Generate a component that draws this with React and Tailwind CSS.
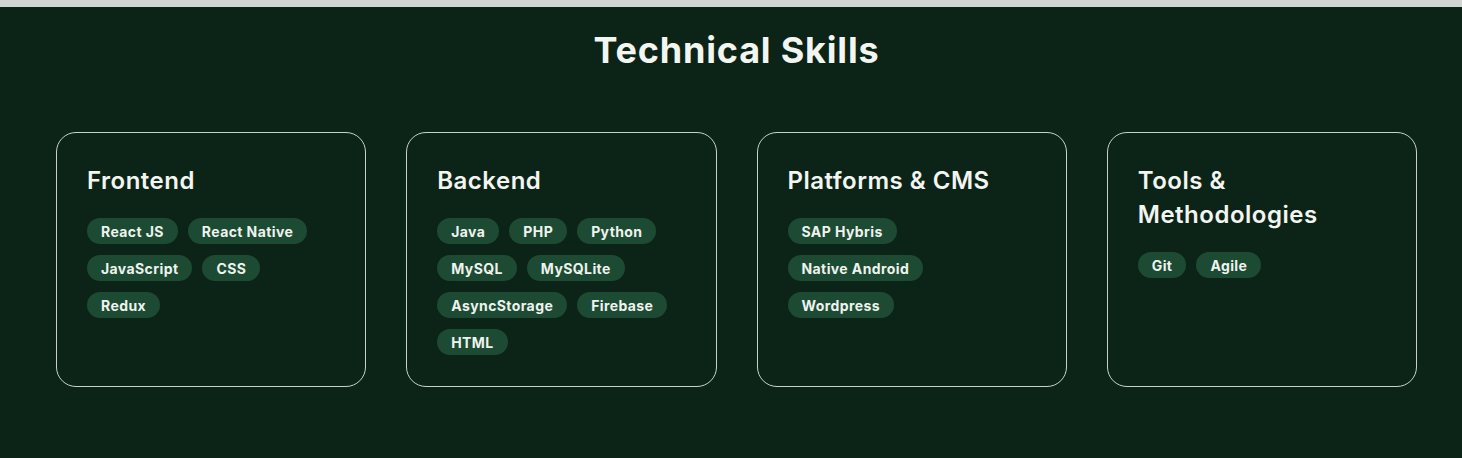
import React from "react";

const groups = [
  { title: "Frontend", items: ["React JS", "React Native", "JavaScript", "CSS", "Redux"] },
  { title: "Backend", items: ["Java", "PHP", "Python", "MySQL", "MySQLite", "AsyncStorage", "Firebase", "HTML"] },
  { title: "Platforms & CMS", items: ["SAP Hybris", "Native Android", "Wordpress"] },
  { title: "Tools & Methodologies", items: ["Git", "Agile"] },
];

export default function App() {
  return (
    <div className="min-h-[458px] bg-[#0c2418] text-[#f2f5f0]" style={{ fontFamily: "Inter, 'Noto Sans', sans-serif" }}>
      <div className="h-[7px] bg-[#d0d6d2]" />
      <section className="pt-[23px] pb-[72px] pl-[56px] pr-[45px]">
        <h2 className="text-center text-[36px] leading-[40px] font-bold tracking-[0.8px]">Technical Skills</h2>
        <div className="mt-[62px] grid grid-cols-4 gap-[40px]">
          {groups.map((g) => (
            <div key={g.title} className="h-[255px] rounded-[20px] border border-[#c9d1cc] px-[30px] pt-[31px]">
              <h3 className="text-[24px] leading-[34px] font-semibold tracking-[0.5px]">{g.title}</h3>
              <div className="mt-[20px] flex flex-wrap gap-x-[10px] gap-y-[11px]">
                {g.items.map((s) => (
                  <span key={s} className="h-[26px] flex items-center rounded-full bg-[#1d4a33] px-[14px] text-[14px] font-bold tracking-[0.4px] text-[#eef3ee]">
                    {s}
                  </span>
                ))}
              </div>
            </div>
          ))}
        </div>
      </section>
    </div>
  );
}
